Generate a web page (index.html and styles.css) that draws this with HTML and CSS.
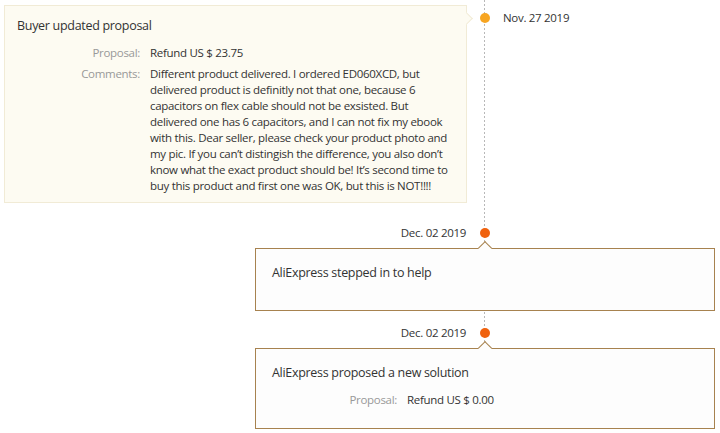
FILE: index.html
```html
<!DOCTYPE html>
<html>
<head>
<meta charset="utf-8">
<link rel="stylesheet" href="styles.css">
</head>
<body>
<div class="timeline">
  <div class="item item-first">
    <div class="card card-buyer">
      <span class="arrow-right"></span>
      <div class="card-title">Buyer updated proposal</div>
      <div class="row row-first">
        <div class="label">Proposal:</div>
        <div class="value">Refund US $ 23.75</div>
      </div>
      <div class="row">
        <div class="label">Comments:</div>
        <div class="value">Different product delivered. I ordered ED060XCD, but<br>delivered product is definitly not that one, because 6<br>capacitors on flex cable should not be exsisted. But<br>delivered one has 6 capacitors, and I can not fix my ebook<br>with this. Dear seller, please check your product photo and<br>my pic. If you can’t distingish the difference, you also don’t<br>know what the exact product should be! It’s second time to<br>buy this product and first one was OK, but this is NOT!!!!</div>
      </div>
    </div>
    <div class="dot-col"><span class="dot dot-yellow"></span></div>
    <div class="date">Nov. 27 2019</div>
  </div>

  <div class="item item-ali">
    <div class="head">
      <div class="date date-left">Dec. 02 2019</div>
      <div class="dot-col"><span class="dot dot-orange"></span></div>
    </div>
    <div class="card card-ali">
      <span class="arrow-up"></span>
      <div class="card-title">AliExpress stepped in to help</div>
    </div>
  </div>

  <div class="item item-ali item-last">
    <div class="head">
      <div class="date date-left">Dec. 02 2019</div>
      <div class="dot-col"><span class="dot dot-orange"></span></div>
    </div>
    <div class="card card-ali card-solution">
      <span class="arrow-up"></span>
      <div class="card-title">AliExpress proposed a new solution</div>
      <div class="row row-first row-ali">
        <div class="label">Proposal:</div>
        <div class="value">Refund US $ 0.00</div>
      </div>
    </div>
  </div>
</div>
</body>
</html>
```

FILE: styles.css
```css
* { box-sizing: border-box; }
html, body { margin: 0; padding: 0; background: #fff; }
body {
  font-family: "Open Sans", "Noto Sans", sans-serif;
  font-size: 11.5px;
  letter-spacing: -0.3px;
  color: #333;
  width: 720px;
  height: 433px;
  overflow: hidden;
}
.timeline {
  position: relative;
  padding-top: 5px;
}
.timeline::before {
  content: "";
  position: absolute;
  left: 484px;
  top: 0;
  bottom: 0;
  width: 1px;
  background: repeating-linear-gradient(to bottom, #b8b8b8 0 2px, transparent 2px 4px);
}
.item { position: relative; }
.item-first {
  display: flex;
  align-items: flex-start;
}
.card {
  position: relative;
}
.card-buyer {
  margin-left: 4px;
  width: 463px;
  height: 198px;
  background: #fdfbf2;
  border: 1px solid #f1ebd6;
  padding: 10px 4px 0 12px;
}
.arrow-right {
  position: absolute;
  right: -5px;
  top: 8px;
  width: 9px;
  height: 9px;
  background: #fdfbf2;
  border-top: 1px solid #f1ebd6;
  border-right: 1px solid #f1ebd6;
  transform: rotate(45deg);
}
.card-title {
  font-size: 12.5px;
  line-height: 20px;
  color: #333;
}
.row {
  display: flex;
  line-height: 16px;
  margin-top: 5px;
}
.row-first { margin-top: 9px; }
.label {
  width: 133px;
  text-align: right;
  color: #999;
  padding-right: 10px;
  flex: none;
}
.value {
  width: 310px;
  flex: none;
  color: #333;
  white-space: nowrap;
}
.dot-col {
  width: 36px;
  flex: none;
  display: flex;
  justify-content: center;
}
.dot {
  display: block;
  width: 10px;
  height: 10px;
  border-radius: 50%;
}
.item-first .dot-col { margin-top: 8px; }
.dot-yellow { background: #f7a521; }
.dot-orange { background: #f0620e; }
.date {
  font-size: 11.5px;
  line-height: 16px;
  margin-top: 5px;
}
.item-ali { margin-top: 22px; }
.item-last { margin-top: 14px; }
.head {
  display: flex;
  align-items: center;
  height: 16px;
}
.date-left {
  width: 467px;
  text-align: right;
  padding-right: 1px;
  margin-top: 0;
}
.card-ali {
  margin-left: 255px;
  width: 460px;
  height: 63px;
  margin-top: 7px;
  background: #fdfdfd;
  border: 1px solid #a7824f;
  padding: 14px 16px 0 16px;
}
.card-solution { height: 81px; }
.arrow-up {
  position: absolute;
  left: 224px;
  top: -6px;
  width: 10px;
  height: 10px;
  background: #fdfdfd;
  border-top: 1px solid #a7824f;
  border-left: 1px solid #a7824f;
  transform: rotate(45deg);
}
.row-ali { margin-top: 9px; }
.row-ali .label { width: 135px; }
```
